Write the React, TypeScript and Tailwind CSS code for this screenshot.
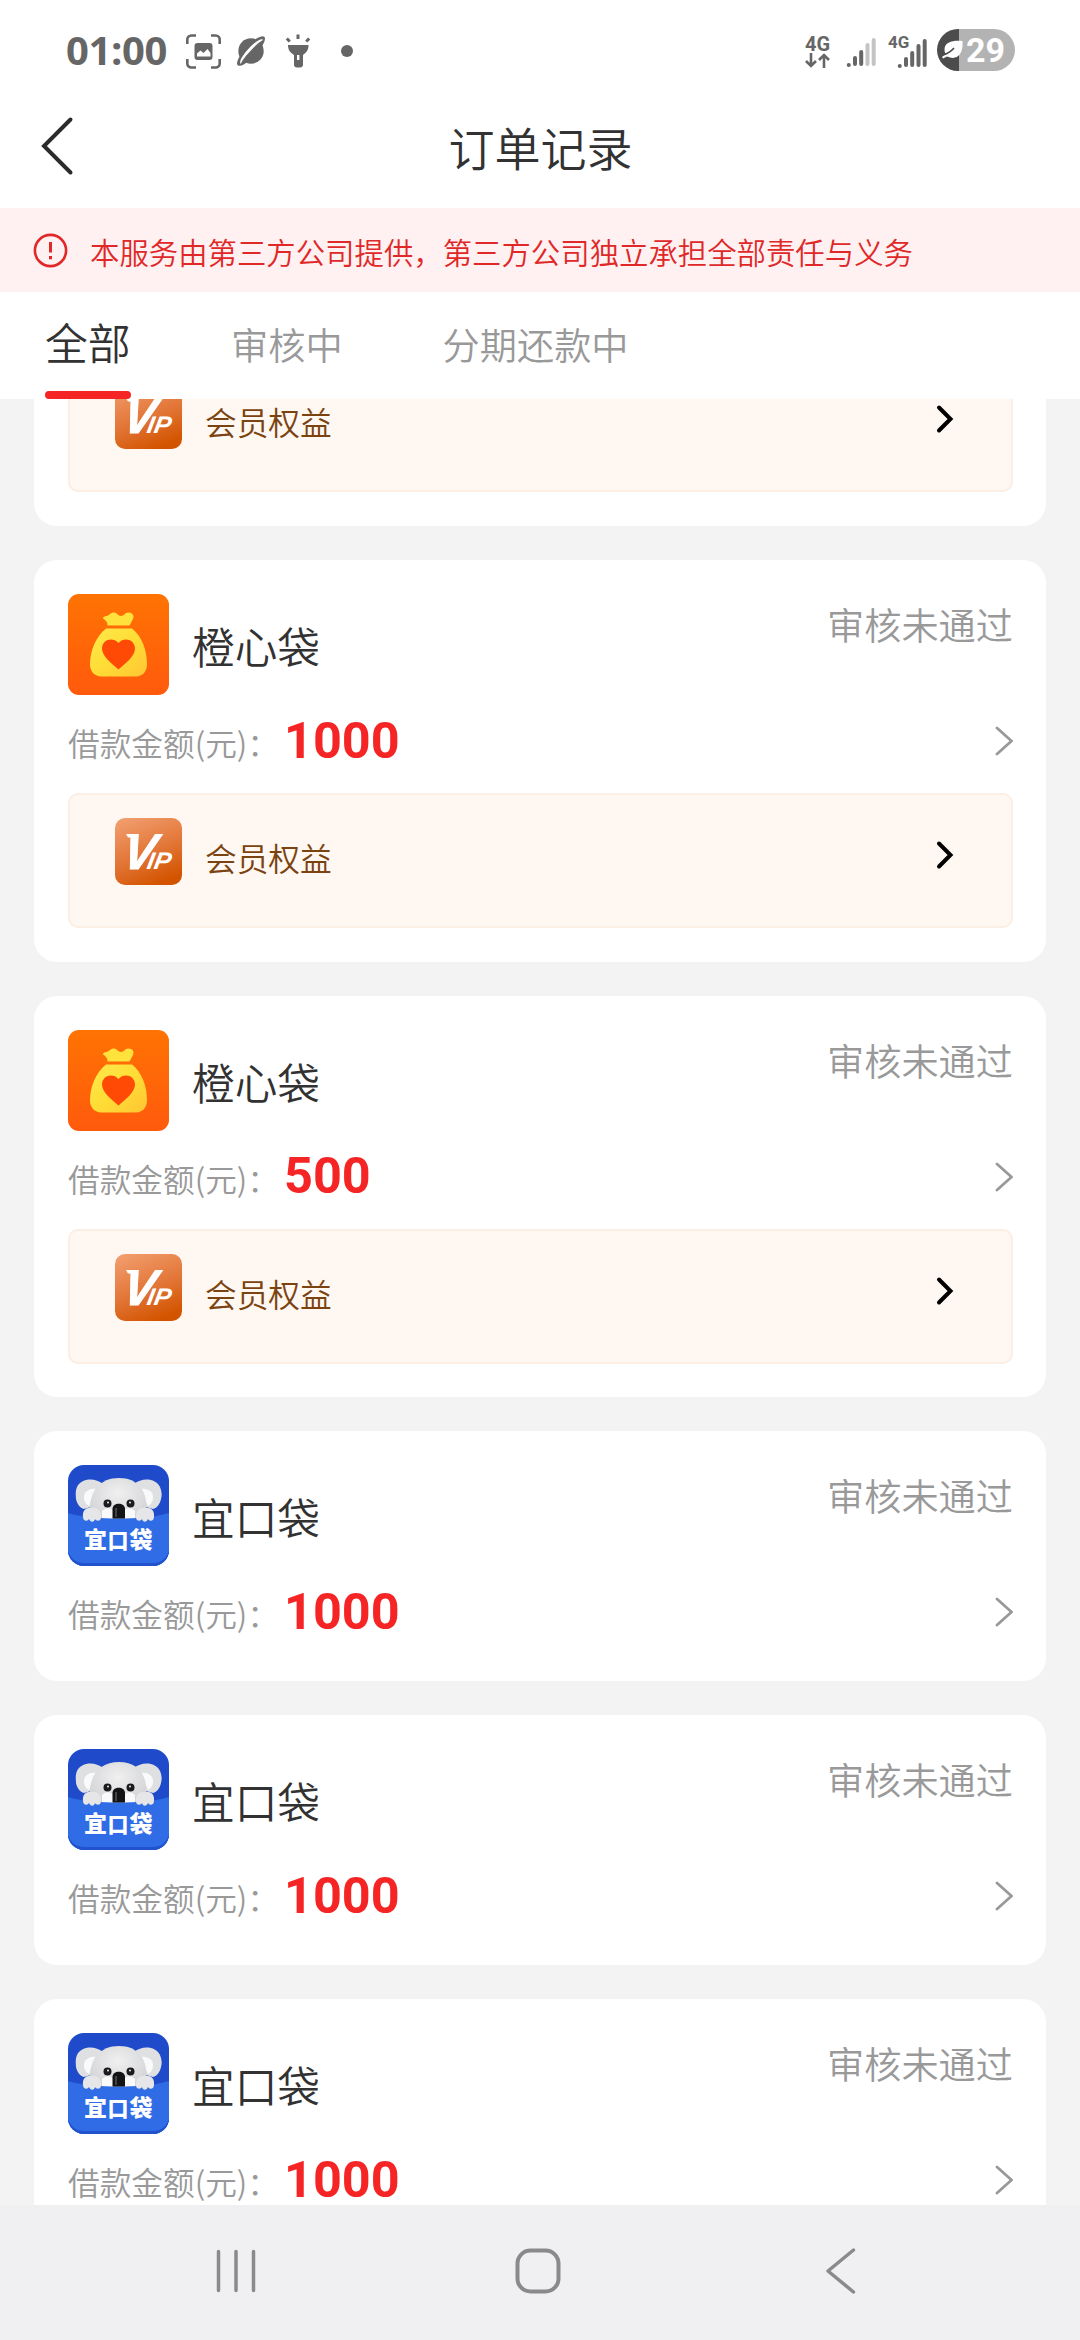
interface Order {
  id: number
  product: 'orange' | 'koala'
  name: string
  amount: number
  status: string
  hasVip: boolean
}

const orders: Order[] = [
  { id: 2, product: 'orange', name: '橙心袋', amount: 1000, status: '审核未通过', hasVip: true },
  { id: 3, product: 'orange', name: '橙心袋', amount: 500, status: '审核未通过', hasVip: true },
  { id: 4, product: 'koala', name: '宜口袋', amount: 1000, status: '审核未通过', hasVip: false },
  { id: 5, product: 'koala', name: '宜口袋', amount: 1000, status: '审核未通过', hasVip: false },
  { id: 6, product: 'koala', name: '宜口袋', amount: 1000, status: '审核未通过', hasVip: false },
]

const tabs = ['全部', '审核中', '分期还款中']

function StatusBar() {
  return (
    <div className="flex h-[102px] shrink-0 items-center pl-[66px] pr-[65px] text-[#666]">
      <span className="mb-[3px] w-[103px] font-['Open_Sans','Noto_Sans',sans-serif] text-[40px] font-bold leading-[40px] tracking-[-0.4px]">01:00</span>

      {/* Screenshot */}
      <svg className="ml-[17px] shrink-0" width="35" height="35" viewBox="0 0 35 35" fill="none">
        <path d="M1.3 10V5.5a4 4 0 0 1 4-4H10M25 1.5h4.7a4 4 0 0 1 4 4V10M33.7 25v4.5a4 4 0 0 1-4 4H25M10 33.5H5.3a4 4 0 0 1-4-4V25" stroke="currentColor" strokeWidth="2.6" />
        <rect x="8.5" y="9" width="18" height="17" rx="3" fill="currentColor" />
        <path d="M11 22.5v-3l3.5-3 3 2.5 4-4 3 4v3.5z" fill="#fff" />
      </svg>

      {/* Planet */}
      <svg className="ml-[14px] shrink-0" width="32" height="32" viewBox="0 0 32 32" fill="none">
        <circle cx="16" cy="16" r="12.7" fill="currentColor" />
        <g transform="rotate(-47 16 16)">
          <ellipse cx="16" cy="16" rx="19.5" ry="5.8" fill="currentColor" />
          <path d="M-.5 17.500C-1 11 33 11 32.500 17.500 29 14.800 3 14.800-.5 17.500z" fill="#fff" />
        </g>
      </svg>

      {/* Torch */}
      <svg className="ml-[18px] shrink-0" width="26" height="34" viewBox="0 0 26 34" fill="none">
        <path d="M13 .5V5M1.800 4.500l3 3M24.200 4.500l-3 3" stroke="currentColor" strokeWidth="3" />
        <path d="M3 11h20.500c0 5-2 7.500-5.500 10v9.500a3 3 0 0 1-3 3h-3a3 3 0 0 1-3-3V21C5 18.500 3 16 3 11z" fill="currentColor" />
        <rect x="12" y="21" width="2.400" height="5" fill="#fff" />
      </svg>
      <span className="ml-[30px] size-[12px] rounded-full bg-[#666]" />

      <div className="ml-auto flex items-center">
        <div className="flex w-[27px] flex-col items-center pt-[1px]">
          <span className="font-[Roboto,sans-serif] text-[20px] font-bold leading-[18px]">4G</span>
          <svg width="25" height="15" viewBox="0 0 25 15" fill="none" stroke="currentColor" strokeWidth="2.6">
            <path d="M6 0v13M1 8l5 5 5-5M19 15V2M14 7l5-5 5 5" />
          </svg>
        </div>
        <svg className="ml-[15px] mt-[4px]" width="30" height="30" viewBox="0 0 30 30" stroke="currentColor" strokeWidth="4" strokeLinecap="round">
          <path d="M2.700 27h.1M9 26v-6M15.200 26V14" />
          <path d="M21.500 26V7M27.700 26V2" stroke="#c4c4c4" />
        </svg>
        <div className="relative ml-[12px] h-[36px] w-[40px]">
          <span className="absolute left-0 top-[1px] font-[Roboto,sans-serif] text-[17px] font-bold leading-none">4G</span>
          <svg className="absolute left-[9px] top-[6px]" width="30" height="30" viewBox="0 0 30 30" stroke="currentColor" strokeWidth="4" strokeLinecap="round">
            <path d="M2.700 27h.1M9 26v-6M15.200 26V14M21.500 26V7M27.700 26V2" />
          </svg>
        </div>
        <div className="mb-[2px] ml-[9px] flex h-[42px] w-[78px] items-center overflow-hidden rounded-full bg-[linear-gradient(90deg,#4c4c4c_22px,#b3b3b3_22px)]">
          <svg className="ml-[4px] shrink-0" width="22" height="20" viewBox="0 0 22 20" fill="none">
            <path d="M21.500 1C13 0 3.500 1.500 3.500 9.500c0 2 .5 3.500 1.500 4.500l-4 3 1 1.500 4-2c9 4 16.500-.5 15.500-15.500z" fill="#fff" />
            <path d="M2.500 14.800C7 13.500 10 11.500 13 8" stroke="#4c4c4c" strokeWidth="1.700" />
          </svg>
          <span className="ml-[3px] font-[Roboto,sans-serif] text-[34px] font-bold leading-[40px] text-white">29</span>
        </div>
      </div>
    </div>
  )
}

function Header() {
  return (
    <div className="flex h-[106px] shrink-0 items-center px-[40px]">
      <svg width="34" height="60" viewBox="0 0 34 60" fill="none" className="mb-[18px]">
        <path d="M30.500 3.500 4 30l26.500 26.500" stroke="#2b2b2b" strokeWidth="4" strokeLinecap="round" />
      </svg>
      <h1 className="flex-1 pb-[18px] pr-[33px] text-center text-[46px] leading-[60px] text-[#323233]">订单记录</h1>
    </div>
  )
}

function Notice() {
  return (
    <div className="flex h-[84px] shrink-0 items-center bg-[#fff1f1] pl-[33px] text-[#e02828]">
      <svg width="35" height="35" viewBox="0 0 35 35" fill="none" stroke="currentColor">
        <circle cx="17.500" cy="17.500" r="15.600" strokeWidth="2.600" />
        <path d="M17.500 9v10.500M17.500 23v3.200" strokeWidth="3" />
      </svg>
      <p className="ml-[22px] pt-[1px] text-[29.400px] leading-[44px]">本服务由第三方公司提供，第三方公司独立承担全部责任与义务</p>
    </div>
  )
}

function Tabs() {
  return (
    <div className="flex h-[107px] shrink-0 gap-[100px] bg-white pl-[45px]">
      {tabs.map((tab, i) =>
        i === 0 ? (
          <div key={tab} className="flex h-full w-[86px] flex-col justify-end">
            <span className="mb-[20px] whitespace-nowrap text-[42.800px] leading-[60px] text-[#323233]">{tab}</span>
            <span className="h-[8px] w-full rounded-full bg-[#f52525]" />
          </div>
        ) : (
          <div key={tab} className="flex h-full items-center pb-[3px] text-[37.200px] leading-[56px] text-[#999]">{tab}</div>
        )
      )}
    </div>
  )
}

function OrangeLogo() {
  return (
    <svg width="101" height="101" viewBox="0 0 101 101" className="rounded-[11px]">
      <defs>
        <linearGradient id="orangeBg" x1="0" y1="0" x2="0" y2="1">
          <stop offset="0" stopColor="#ff7303" />
          <stop offset="1" stopColor="#ff5a0c" />
        </linearGradient>
        <linearGradient id="bag" x1="0" y1="0" x2="1" y2="1">
          <stop offset="0" stopColor="#ffe94b" />
          <stop offset=".5" stopColor="#ffdd36" />
          <stop offset="1" stopColor="#ffc533" />
        </linearGradient>
      </defs>
      <rect width="101" height="101" fill="url(#orangeBg)" />
      <path d="M35 24.500c0-2 1.500-2 4-2.500 2.500-1 3.500-3.500 7-3.500 3 0 4 3.500 7 3.500s4-3.500 7.500-3.500c4 0 6 3 4.500 6.500L61.500 31.500H39.500c0-4-1.500-4.500-4.500-7z" fill="#ffe23c" />
      <path d="M38 34.500h26c10 8 15 22 15 36 0 7-4.500 12-11 12H33.500c-7 0-11.500-5-11.500-12 0-14 6-28 16-36z" fill="url(#bag)" />
      <path d="M50.500 75.500C43 69 34 62 34 54.500c0-9 11-12 16.500-5.500 5.500-6.500 16.500-3.500 16.500 5.500 0 7.500-9 14.500-16.500 21z" fill="#ff4a06" />
    </svg>
  )
}

function KoalaLogo() {
  return (
    <svg width="101" height="101" viewBox="0 0 101 101" className="rounded-[16px]">
      <defs>
        <radialGradient id="fur" cx=".5" cy=".35" r=".7">
          <stop offset="0" stopColor="#f0f0f0" />
          <stop offset="1" stopColor="#cfd0d3" />
        </radialGradient>
      </defs>
      <rect width="101" height="101" fill="#1f4bcb" />
      {/* ears */}
      <path d="M35 19C27 12 13 13 9 22c-2 5-1 8-1 12 1 5 4 9 8 10l14-4z" fill="#dfe0e2" />
      <path d="M66 19c8-7 22-6 26 3 2 5 2 8 1 12-1 5-4 9-8 10l-14-4z" fill="#dfe0e2" />
      <path d="M28 24c-7-1-12 3-12 8s2 7 5 9z" fill="#fafafa" />
      <path d="M73 24c7-1 12 3 12 8s-2 7-5 9z" fill="#fafafa" />
      {/* head */}
      <path d="M22 46c-1-20 10-33 29-33s29 13 27 33l-6 10H28z" fill="url(#fur)" />
      <path d="M34 46c5-4 8-3 11 0v9H34zM67 46c-5-4-8-3-11 0v9h11z" fill="#fafafa" />
      <circle cx="39.500" cy="38.500" r="4" fill="#1b1b1f" />
      <circle cx="62.500" cy="38.500" r="4" fill="#1b1b1f" />
      <circle cx="40" cy="37.500" r=".9" fill="#fff" />
      <circle cx="62" cy="37.500" r=".9" fill="#fff" />
      {/* pocket */}
      <path d="M0 48c18 5 33 5.500 50.500 5.500S83 53 101 48v53H0z" fill="#2f6ce6" />
      <path d="M0 86c3 8 8 12 17 12h67c9 0 14-4 17-12v15H0z" fill="#2252cd" />
      <path d="M44.500 44c0-7 12.500-7 12.500 0v9.500H44.500z" fill="#141416" />
      <path d="M48 43v9" stroke="#55555a" strokeWidth="1.500" />
      {/* paws */}
      <path d="M15 52c-1-7 4-10 9-9 5-1 10 3 9 10-1 4-5 3-6 1-1 4-5 3-6 0-2 3-6 2-6-2zM86 52c1-7-4-10-9-9-5-1-10 3-9 10 1 4 5 3 6 1 1 4 5 3 6 0 2 3 6 2 6-2z" fill="#e6e6e8" />
      <text x="16 39.500 61.500" y="83" fontSize="23" fontWeight="900" fill="#fff" fontFamily="'Noto Sans CJK SC', sans-serif">宜<tspan fontSize="21">口</tspan>袋</text>
    </svg>
  )
}

function VipLogo() {
  return (
    <svg width="67" height="67" viewBox="0 0 67 67" className="rounded-[10px]">
      <defs>
        <linearGradient id="vipBg" x1=".2" y1="0" x2=".6" y2="1">
          <stop offset="0" stopColor="#f19c6c" />
          <stop offset=".55" stopColor="#e27637" />
          <stop offset="1" stopColor="#d35400" />
        </linearGradient>
      </defs>
      <rect width="67" height="67" fill="url(#vipBg)" />
      <path d="M11 16h6v3.500h-4z" fill="#fff" />
      {/* skewed around the baseline, for a steeper slant than the font's own */}
      <g transform="translate(0 51) skewX(-10)" fill="#fff" fontFamily="'Liberation Sans', sans-serif" fontWeight="700" fontStyle="italic">
        <text x="6" y="0" fontSize="50" textLength="32" lengthAdjust="spacingAndGlyphs" stroke="#fff" strokeWidth="1">V</text>
        <text x="31" y="0" fontSize="24" textLength="24" lengthAdjust="spacingAndGlyphs">IP</text>
      </g>
    </svg>
  )
}

function VipEntry() {
  return (
    <div className="flex h-[135px] items-start rounded-[10px] border-2 border-[#fbeee2] bg-[#fff7f1] pl-[45px] pr-[56px] pt-[23px]">
      <VipLogo />
      <span className="ml-[23px] mt-[15px] text-[31.680px] leading-[48px] text-[#7a4310]">会员权益</span>
      <svg className="ml-auto mt-[21px]" width="20" height="32" viewBox="0 0 20 32" fill="none">
        <path d="M4 4.500 15.500 16 4 27.500" stroke="#000" strokeWidth="4" strokeLinecap="round" />
      </svg>
    </div>
  )
}

function OrderCard({ order }: { order: Order }) {
  return (
    <div className={order.hasVip ? 'h-[401.5px] shrink-0 rounded-[23px] bg-white pl-[34px] pr-[33px] pt-[34px]' : 'h-[250px] shrink-0 rounded-[23px] bg-white pl-[34px] pr-[33px] pt-[34px]'}>
      <div className="flex h-[101px] items-center">
        {order.product === 'orange' ? <OrangeLogo /> : <KoalaLogo />}
        <span className="ml-[23px] mt-[1px] text-[42.700px] leading-[60px] text-[#323233]">{order.name}</span>
        <span className="ml-auto self-start pt-[2px] text-[37.200px] leading-[56px] text-[#999]">{order.status}</span>
      </div>
      <div className="mt-[12px] flex h-[68px] items-center justify-between">
        <div className="flex items-center">
          <span className="mt-[2px] text-[31.680px] leading-[48px] text-[#999]">借款金额(元)：</span>
          <span className="mb-px ml-[5px] font-[Roboto,sans-serif] text-[50.400px] font-bold leading-[60px] text-[#f52525]">{order.amount}</span>
        </div>
        <svg width="20" height="32" viewBox="0 0 20 32" fill="none">
          <path d="M4 3 18.500 16 4 29" stroke="#999" strokeWidth="2.800" strokeLinecap="round" />
        </svg>
      </div>
      {order.hasVip && (
        <div className="mt-[18px]">
          <VipEntry />
        </div>
      )}
    </div>
  )
}

function NavBar() {
  return (
    <div className="flex h-[135px] shrink-0 items-center bg-[#f0f0f2] pb-[4px] pl-[214px] pr-[222px]">
      <div className="flex w-full items-center justify-between">
        <svg width="44" height="46" viewBox="0 0 44 46" stroke="#8a8a8c" strokeWidth="3.500" strokeLinecap="round">
          <path d="M4.500 3.500v39M22 3.500v39M39.500 3.500v39" />
        </svg>
        <svg className="mr-[7px]" width="48" height="48" viewBox="0 0 48 48" fill="none" stroke="#8a8a8c" strokeWidth="4">
          <rect x="3.500" y="3.500" width="41" height="41" rx="13" />
        </svg>
        <svg width="34" height="50" viewBox="0 0 34 50" fill="none" stroke="#8a8a8c" strokeWidth="3.500" strokeLinecap="round" strokeLinejoin="round">
          <path d="M29.500 4 4 25l25.500 21" />
        </svg>
      </div>
    </div>
  )
}

export default function App() {
  return (
    <div className="flex h-[2340px] w-[1080px] flex-col overflow-hidden bg-white font-['Noto_Sans_CJK_SC',sans-serif] font-[350]">
      <StatusBar />
      <Header />
      <Notice />
      <Tabs />
      <div className="flex min-h-0 flex-1 flex-col gap-[34px] overflow-hidden bg-[#f3f3f3] px-[34px]">
        {/* Tail of the card that is scrolled out at the top */}
        <div className="h-[127px] shrink-0 overflow-hidden rounded-b-[23px] bg-white pl-[34px] pr-[33px]">
          <div className="-mt-[42px]">
            <VipEntry />
          </div>
        </div>
        {orders.map((order) => (
          <OrderCard key={order.id} order={order} />
        ))}
      </div>
      <NavBar />
    </div>
  )
}
